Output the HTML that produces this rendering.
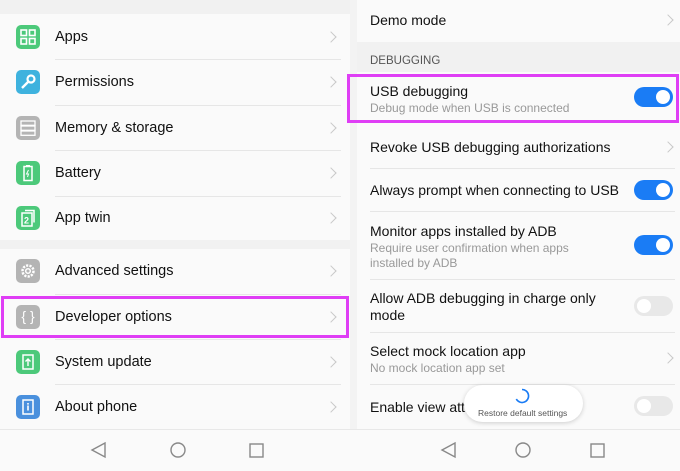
<!DOCTYPE html>
<html><head><style>
*{margin:0;padding:0;box-sizing:border-box}
body{width:680px;height:471px;background:#fafafa;font-family:"Liberation Sans",sans-serif;position:relative;overflow:hidden;color:#111}
.a{position:absolute}
.t{position:absolute;font-size:14.5px;white-space:nowrap}
.r .t,.t.r{font-size:14px}
.s{position:absolute;font-size:12px;color:#999;white-space:nowrap}
.ic{position:absolute;left:16px;width:24px;height:24px;border-radius:5px}
.sep{position:absolute;height:1px;background:#e6e6e6}
.chev{position:absolute;width:8px;height:8px;border-right:1.3px solid #c8c8c8;border-top:1.3px solid #c8c8c8;transform:rotate(45deg)}
.tg{position:absolute;left:634px;width:39px;height:20px;border-radius:10px;background:#1a7cf5}
.tg::after{content:"";position:absolute;right:3px;top:3px;width:14px;height:14px;border-radius:50%;background:#fff}
.tg.off{background:#e8e8e8}
.tg.off::after{left:3px;right:auto}
.box{position:absolute;border:3px solid #df3ef5}
</style></head><body>
<div class="a" style="left:0;top:0;width:350px;height:14px;background:#f1f1f1"></div>
<div class="a" style="left:0;top:240px;width:350px;height:9px;background:#f1f1f1"></div>
<div class="a" style="left:350px;top:0;width:7px;height:430px;background:#f3f3f3"></div>
<div class="a" style="left:357px;top:42px;width:323px;height:30px;background:#f1f1f1"></div>

<div class="ic" style="top:25px;background:#4cc97a"><svg width="24" height="24"><g fill="none" stroke="#fff" stroke-width="1.6"><rect x="5" y="5" width="5.5" height="5.5"/><rect x="13.5" y="5" width="5.5" height="5.5"/><rect x="5" y="13.5" width="5.5" height="5.5"/><rect x="13.5" y="13.5" width="5.5" height="5.5"/></g></svg></div>
<div class="ic" style="top:70px;background:#3eb2de"><svg width="24" height="24"><circle cx="15" cy="9" r="3.5" fill="none" stroke="#fff" stroke-width="2.2"/><path d="M12.5 11.5L6 18" stroke="#fff" stroke-width="2.4"/></svg></div>
<div class="ic" style="top:116px;background:#b4b4b4"><svg width="24" height="24"><g fill="none" stroke="#fff" stroke-width="1.3"><rect x="5" y="5" width="14" height="4.3"/><rect x="5" y="10" width="14" height="4.3"/><rect x="5" y="15" width="14" height="4.3"/></g></svg></div>
<div class="ic" style="top:161px;background:#4cc97a"><svg width="24" height="24"><rect x="8" y="5.5" width="8" height="14" fill="none" stroke="#fff" stroke-width="1.5"/><rect x="10" y="4" width="4" height="2" fill="#fff"/><path d="M12.5 9l-2 4h2l-1 3" stroke="#fff" fill="none"/></svg></div>
<div class="ic" style="top:206px;background:#4cc97a"><svg width="24" height="24"><rect x="6" y="7" width="10" height="13" fill="none" stroke="#fff" stroke-width="1.5"/><path d="M9 4.5h9v12" fill="none" stroke="#fff" stroke-width="1.5"/><text x="8" y="17.5" font-size="9" fill="#fff" font-family="Liberation Sans" font-weight="bold">2</text></svg></div>
<div class="ic" style="top:259px;background:#b4b4b4"><svg width="24" height="24"><circle cx="12" cy="12" r="5.5" fill="none" stroke="#fff" stroke-width="2.5" stroke-dasharray="2.2 1.2"/><circle cx="12" cy="12" r="2.3" fill="none" stroke="#fff" stroke-width="1.5"/></svg></div>
<div class="ic" style="top:305px;background:#b4b4b4;color:#fff;font-size:14px;text-align:center;line-height:23px">{ }</div>
<div class="ic" style="top:350px;background:#4cc97a"><svg width="24" height="24"><rect x="7" y="5" width="10" height="14" fill="none" stroke="#fff" stroke-width="1.5"/><path d="M12 16V9M9.5 11.5L12 9l2.5 2.5" stroke="#fff" fill="none" stroke-width="1.4"/></svg></div>
<div class="ic" style="top:395px;background:#4a90dd"><svg width="24" height="24"><rect x="7" y="5" width="10" height="14" fill="none" stroke="#fff" stroke-width="1.5"/><rect x="11.2" y="8" width="1.6" height="1.6" fill="#fff"/><rect x="11.2" y="10.5" width="1.6" height="5" fill="#fff"/></svg></div>

<div class="t" style="left:55px;top:29px">Apps</div>
<div class="t" style="left:55px;top:74px">Permissions</div>
<div class="t" style="left:55px;top:120px">Memory &amp; storage</div>
<div class="t" style="left:55px;top:165px">Battery</div>
<div class="t" style="left:55px;top:210px">App twin</div>
<div class="t" style="left:55px;top:263px">Advanced settings</div>
<div class="t" style="left:55px;top:309px">Developer options</div>
<div class="t" style="left:55px;top:354px">System update</div>
<div class="t" style="left:55px;top:399px">About phone</div>
<div class="sep" style="left:55px;width:286px;top:59px"></div>
<div class="sep" style="left:55px;width:286px;top:105px"></div>
<div class="sep" style="left:55px;width:286px;top:150px"></div>
<div class="sep" style="left:55px;width:286px;top:196px"></div>
<div class="sep" style="left:55px;width:286px;top:294px"></div>
<div class="sep" style="left:55px;width:286px;top:339px"></div>
<div class="sep" style="left:55px;width:286px;top:384px"></div>
<div class="chev" style="left:327px;top:33px"></div>
<div class="chev" style="left:327px;top:78px"></div>
<div class="chev" style="left:327px;top:124px"></div>
<div class="chev" style="left:327px;top:169px"></div>
<div class="chev" style="left:327px;top:214px"></div>
<div class="chev" style="left:327px;top:267px"></div>
<div class="chev" style="left:327px;top:313px"></div>
<div class="chev" style="left:327px;top:358px"></div>
<div class="chev" style="left:327px;top:403px"></div>
<div class="box" style="left:1px;top:296px;width:348px;height:42px"></div>

<div class="t r" style="left:370px;top:12px">Demo mode</div>
<div class="chev" style="left:664px;top:16px"></div>
<div class="a" style="left:370px;top:55px;font-size:11.5px;color:#555">DEBUGGING</div>
<div class="t r" style="left:370px;top:83px">USB debugging</div>
<div class="s" style="left:370px;top:101px">Debug mode when USB is connected</div>
<div class="tg" style="top:87px"></div>
<div class="box" style="left:347px;top:74px;width:332px;height:49px"></div>
<div class="t r" style="left:370px;top:139px">Revoke USB debugging authorizations</div>
<div class="chev" style="left:664px;top:143px"></div>
<div class="sep" style="left:370px;width:305px;top:168px"></div>
<div class="t r" style="left:370px;top:182px">Always prompt when connecting to USB</div>
<div class="tg" style="top:180px"></div>
<div class="sep" style="left:370px;width:305px;top:211px"></div>
<div class="t r" style="left:370px;top:223px">Monitor apps installed by ADB</div>
<div class="s" style="left:370px;top:241px;line-height:15px">Require user confirmation when apps<br>installed by ADB</div>
<div class="tg" style="top:235px"></div>
<div class="sep" style="left:370px;width:305px;top:279px"></div>
<div class="t r" style="left:370px;top:290px;line-height:17px">Allow ADB debugging in charge only<br>mode</div>
<div class="tg off" style="top:296px"></div>
<div class="sep" style="left:370px;width:305px;top:332px"></div>
<div class="t r" style="left:370px;top:343px">Select mock location app</div>
<div class="s" style="left:370px;top:361px">No mock location app set</div>
<div class="chev" style="left:664px;top:354px"></div>
<div class="sep" style="left:370px;width:305px;top:384px"></div>
<div class="t r" style="left:370px;top:399px">Enable view att</div>
<div class="tg off" style="top:396px"></div>
<div class="a" style="left:464px;top:385px;width:119px;height:37px;border-radius:19px;background:#fff;box-shadow:0 1px 5px rgba(0,0,0,.18)"></div>
<svg class="a" style="left:513px;top:387px" width="18" height="18"><path d="M9 2.5A6.5 6.5 0 1 1 3.3 12" fill="none" stroke="#1a7cf5" stroke-width="1.6"/></svg>
<div class="a" style="left:478px;top:408px;font-size:8.5px;color:#555">Restore default settings</div>

<div class="sep" style="left:0;width:680px;top:429px;background:#e8e8e8"></div>
<svg class="a" style="left:0;top:430px" width="680" height="41"><g fill="none" stroke="#888" stroke-width="1.4"><path d="M105 13L92 20L105 27Z"/><circle cx="178" cy="20" r="7"/><rect x="250" y="14" width="13" height="13"/><path d="M455 13L442 20L455 27Z"/><circle cx="523" cy="20" r="7"/><rect x="591" y="14" width="13" height="13"/></g></svg>
</body></html>
